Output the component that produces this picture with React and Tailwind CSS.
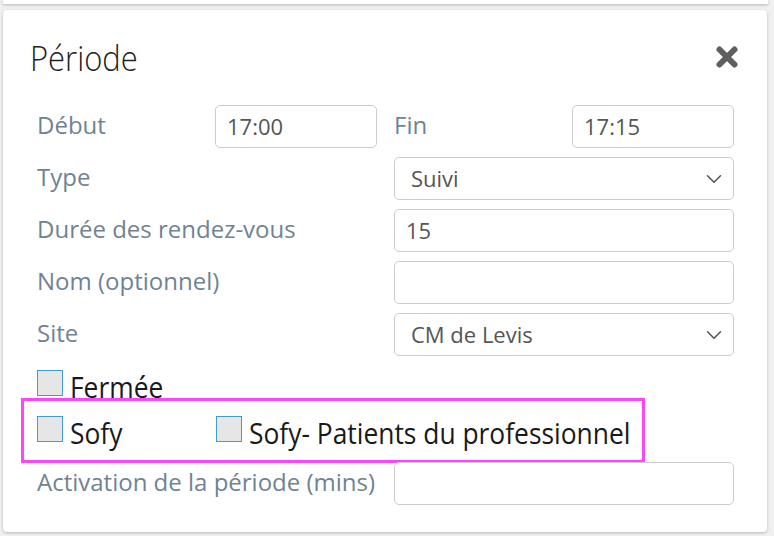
import { ChevronDown } from 'lucide-react';

const font = { fontFamily: '"Open Sans", "Liberation Sans", sans-serif' };

function Field({ value = '', select = false, className = '' }) {
  return (
    <div
      className={`flex h-[43px] items-center justify-between rounded-[5px] border border-[#cccccc] bg-white pl-[11px] pr-[6px] text-[22px] text-[#555555] ${className}`}
    >
      <span className={select ? 'pl-[5px]' : ''}>{value}</span>
      {select && <ChevronDown size={26} strokeWidth={1.4} className="text-[#555555]" />}
    </div>
  );
}

function Label({ children }) {
  return <div className="flex h-[43px] items-center pb-[3px] text-[24px] text-[#6f8394]">{children}</div>;
}

function Check({ label }) {
  return (
    <div className="flex h-[28px] items-center gap-[7px]">
      <span className="h-[26px] w-[26px] shrink-0 border border-[#3d9ddb] bg-[#e6e6e6]" />
      <span className="mt-[6px] origin-left scale-x-[0.91] whitespace-nowrap text-[29px] leading-none text-[#1a1a1a]">
        {label}
      </span>
    </div>
  );
}

export default function App() {
  return (
    <div className="min-h-[536px] w-[774px] overflow-hidden bg-[#f0f0f0]" style={font}>
      <div className="mx-[3px] h-[4px] w-[765px] bg-white shadow-[0_1px_3px_rgba(0,0,0,0.25)]" />
      <div className="mx-[3px] mt-[6px] h-[522px] w-[764px] rounded-[4px] bg-white shadow-[0_1px_3px_rgba(0,0,0,0.25)]">
        <div className="flex items-center justify-between pl-[27px] pr-[28px] pt-[28px]">
          <h1 className="origin-left scale-x-[0.91] text-[34px] font-light leading-[40px] text-[#222222]">Période</h1>
          <svg width="24" height="24" viewBox="0 0 24 24" className="-mt-[2px]">
            <path d="M4.5 4.5 L19.5 19.5 M19.5 4.5 L4.5 19.5" stroke="#5f5f5f" strokeWidth="6" strokeLinecap="round" />
          </svg>
        </div>

        <div className="mt-[27px] pl-[34px] pr-[33px]">
          <div className="grid grid-cols-2 gap-x-[17px] gap-y-[9px]">
            <div className="grid grid-cols-[178px_1fr]">
              <Label>Début</Label>
              <Field value="17:00" />
            </div>
            <div className="grid grid-cols-[178px_1fr]">
              <Label>Fin</Label>
              <Field value="17:15" />
            </div>

            <Label>Type</Label>
            <Field value="Suivi" select />

            <Label>Durée des rendez-vous</Label>
            <Field value="15" />

            <Label>Nom (optionnel)</Label>
            <Field />

            <Label>Site</Label>
            <Field value="CM de Levis" select />
          </div>

          <div className="mt-[13px]">
            <Check label="Fermée" />
          </div>

          <div className="-ml-[16px] mt-[1px] w-[624px] border-[3px] border-[#ff44ff] pb-[17px] pl-[13px] pt-[14px]">
            <div className="grid grid-cols-[179px_1fr]">
              <Check label="Sofy" />
              <Check label="Sofy- Patients du professionnel" />
            </div>
          </div>

          <div className="-mt-[1px] grid grid-cols-2 gap-x-[17px]">
            <Label>Activation de la période (mins)</Label>
            <Field />
          </div>
        </div>
      </div>
    </div>
  );
}
